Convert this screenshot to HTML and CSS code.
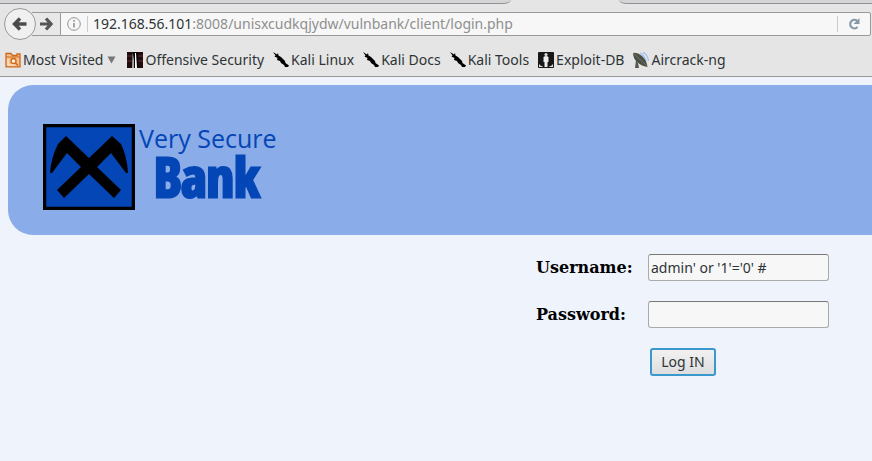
FILE: index.html
```html
<!DOCTYPE html>
<html lang="en">
<head>
<meta charset="utf-8">
<title>Very Secure Bank</title>
<link rel="stylesheet" href="styles.css">
</head>
<body>
<header class="chrome">
  <div class="tabs"><span class="tab tab-left"></span><span class="tab tab-right"></span></div>
  <div class="nav">
    <button class="back" aria-label="Back"><svg width="16" height="16" viewBox="0 0 16 16"><path d="M8 2.500L2.500 8L8 13.500M3 8H14.500" fill="none" stroke="#4b4b4b" stroke-width="3.400"/></svg></button>
    <button class="forward" aria-label="Forward"><svg width="13" height="14" viewBox="0 0 13 14"><path d="M6 1.500L11 7L6 12.500M11 7H0" fill="none" stroke="#555" stroke-width="3.200"/></svg></button>
    <div class="address">
      <svg class="info" width="14" height="14" viewBox="0 0 14 14"><circle cx="7" cy="7" r="6.300" fill="none" stroke="#929292"/><path d="M7 6V10.500M7 3V4.800" stroke="#929292" stroke-width="1.600"/></svg>
      <p class="url"><strong>192.168.56.101</strong>:8008/unisxcudkqjydw/vulnbank/client/login.php</p>
      <button class="reload" aria-label="Reload"><svg width="12" height="12" viewBox="0 0 12 12"><path d="M9.200 3A4.200 4.200 0 1 0 9.500 9" fill="none" stroke="#8798a8" stroke-width="2.200"/><path d="M11.500 0V6H5.500Z" fill="#8798a8"/></svg></button>
    </div>
  </div>
  <nav class="bookmarks">
    <a href="#"><svg width="16" height="16" viewBox="0 0 16 16"><path d="M1 14.800V1.500H6L7.500 3.500H12V2H15V14.800Z" fill="#f5c28c" stroke="#cf661a" stroke-width="1.300"/><path d="M1 5H15" stroke="#cf661a"/><path d="M3 7V13H10" fill="none" stroke="#fff0df"/><circle cx="8.500" cy="9" r="2.500" fill="#fff0df" stroke="#cf661a" stroke-width="1.300"/><path d="M10.500 11L13 13.500" stroke="#cf661a" stroke-width="1.500"/></svg>Most Visited<svg class="caret" width="9" height="8" viewBox="0 0 9 8"><path d="M.5 .5H8.500L4.500 7.500Z" fill="#777"/></svg></a>
    <a href="#"><svg width="16" height="16" viewBox="0 0 16 16"><path d="M0 0H16V16H0Z" fill="#210b0d"/><path d="M0 4H5M11 4H16M0 9H5M11 9H16" stroke="#603234"/><path d="M5 0H11V16H5Z" fill="#080707"/><path d="M5.500 0L7 8V16H5Z" fill="#aaa"/><path d="M8 1H9L10 16H8Z" fill="#fff"/></svg>Offensive Security</a>
    <a href="#"><svg width="16" height="16" viewBox="0 0 16 16"><use href="#kali"/></svg>Kali Linux</a>
    <a href="#"><svg width="16" height="16" viewBox="0 0 16 16"><use href="#kali"/></svg>Kali Docs</a>
    <a href="#"><svg width="16" height="16" viewBox="0 0 16 16"><g id="kali"><path d="M0 0L4 2.500L5 1L5.500 3.500L8 5L12 9L12.500 11L16 13.500L15 15H12L11 13L8 11L7 9L4 8L4.500 6L1.500 4.500L2.500 3.500Z"/></g></svg>Kali Tools</a>
    <a href="#"><svg width="16" height="16" viewBox="0 0 16 16"><rect width="16" height="16" rx="1" fill="#171717"/><circle cx="8" cy="2.500" r="1.600" fill="#ddd"/><path d="M5.500 5Q8 3 10.500 5V10H9.500V15H6.500V10H5.500Z" fill="#eee"/><path d="M1 12L3 14H5L4 15H1ZM15 12L13 14H11L12 15H15Z" fill="#ddd"/></svg>Exploit-DB</a>
    <a href="#"><svg width="16" height="16" viewBox="0 0 16 16"><path d="M7 1Q12 4 13 10M10 0Q15 3 15.500 9" fill="none" stroke="#a9c5ef" stroke-width="1.500"/><path d="M0 1Q4 0 9 4Q14 9 14.500 15Q8 14 4 10Q0 6 0 1Z" fill="#4b5045"/><path d="M3 8L2 16H6L5 11Z" fill="#55594e"/><path d="M0 1L14 14" stroke="#73786a"/></svg>Aircrack-ng</a>
  </nav>
</header>
<main>
  <section class="banner">
    <svg class="mark" width="92" height="86" viewBox="0 0 92 86"><rect x="1.500" y="1.500" width="89" height="83" fill="#0446b5" stroke="#000" stroke-width="3.500"/><path d="M23 12L46 34L69 12L78 20Q84 32 85 49H83L68 29L54 43L78 66L71 74L46 50L21 74L14 66L38 43L24 29L9 49H7Q8 34 15 20Z"/></svg>
    <p class="name"><span class="small">Very Secure</span><span class="big">Bank</span></p>
  </section>
  <form class="login">
    <label for="user">Username:</label><input id="user" type="text" value="admin' or '1'='0' #">
    <label for="pass">Password:</label><input id="pass" type="password">
    <button class="submit" type="button">Log IN</button>
  </form>
</main>
</body>
</html>
```
FILE: styles.css
```css
* { box-sizing: border-box; }
body { margin: 0; background: #eef3fc; font: 14px/20px "Noto Sans", sans-serif; overflow-x: hidden; }
p { margin: 0; }
button { padding: 0; }
.chrome { background: #e5e5e5; border-bottom: 1px solid #999; color: #2e3436; }
.tabs { display: flex; justify-content: space-between; height: 4px; }
.tab { background: #d5d5d5; border-bottom: 1px solid #8d9299; }
.tab-left { width: 511px; border-bottom-right-radius: 8px 4px; }
.tab-right { width: 253px; border-bottom-left-radius: 8px 4px; }
.nav { display: flex; align-items: center; height: 40px; padding: 0 1px 0 4px; }
.back { display: grid; place-items: center; width: 32px; height: 32px; border: 1px solid #999; border-radius: 50%; background: #f0f0f0; z-index: 1; }
.forward { display: grid; place-items: center; width: 28px; height: 24px; margin-left: -4px; border: solid #999; border-width: 1px 0; background: #e8e8e8; }
.address { display: flex; align-items: center; flex: 1; height: 24px; border: 1px solid #999; border-radius: 0 2px 2px 0; background: #f7f7f7; }
.info { margin: 0 6px; }
.url { flex: 1; border-left: 1px solid #ccc; padding-left: 5px; line-height: 16px; color: #8f8f8f; }
.url strong { font-weight: 400; color: #2e3436; }
.reload { display: grid; place-items: center; width: 33px; height: 16px; border: 0; border-left: 1px solid #ccc; background: none; }
.bookmarks { display: flex; height: 32px; padding: 0 5px; gap: 9px; align-items: center; }
.bookmarks a { display: flex; align-items: center; gap: 2px; color: inherit; text-decoration: none; white-space: nowrap; }
.caret { margin: 0 2px; }
main { padding: 8px 0 8px 8px; }
.banner { display: flex; align-items: flex-start; height: 150px; padding: 39px 35px; border-radius: 25px 0 0 25px; background: #8aace8; }
.name { display: flex; flex-direction: column; padding-left: 4px; color: #0446b5; }
.small { font: 25px/28px "Open Sans", sans-serif; }
.big { padding-left: 15px; font: bold 54px/48px "Liberation Sans Narrow", "Open Sans Condensed", "DejaVu Sans Condensed", sans-serif; -webkit-text-stroke: 3px #0446b5; }
.login { display: grid; grid-template-columns: 96px 181px; column-gap: 16px; row-gap: 20px; justify-content: end; align-items: center; padding: 19px 43px 0 0; }
.login label { font: bold 16px/24px "DejaVu Serif", serif; }
.login input { width: 100%; height: 27px; padding: 0 2px; border: 1px solid #aaa; border-top-color: #777; border-radius: 3px; background: #f7f7f7; color: #2e3436; font: 14px/20px "Noto Sans", sans-serif; }
.submit { grid-column: 2; justify-self: start; width: 66px; height: 28px; margin-left: 2px; border: 2px solid #3b98cc; border-radius: 3px; background: linear-gradient(#f1f1f1, #dedede); color: #2e3436; font: 14px/20px "Noto Sans", sans-serif; }
```
